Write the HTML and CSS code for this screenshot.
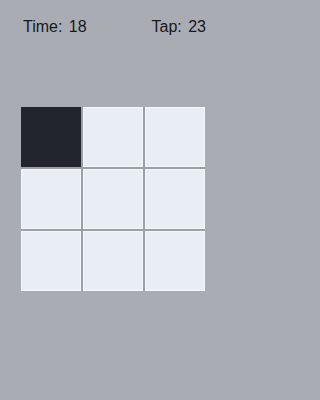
FILE: index.html
```html
<!DOCTYPE html>
<html>
<head>
<meta charset="utf-8">
<link rel="stylesheet" href="styles.css">
</head>
<body>
<div class="app">
  <div class="header">
    <span class="stat">Time: 18</span>
    <span class="stat">Tap: 23</span>
  </div>
  <div class="board">
    <div class="cell dark"></div>
    <div class="cell"></div>
    <div class="cell"></div>
    <div class="cell"></div>
    <div class="cell"></div>
    <div class="cell"></div>
    <div class="cell"></div>
    <div class="cell"></div>
    <div class="cell"></div>
  </div>
</div>
</body>
</html>
```
FILE: styles.css
```css
html, body {
  margin: 0;
  padding: 0;
  background: #a9adb3;
}
.app {
  width: 225px;
  height: 400px;
  display: flex;
  flex-direction: column;
  align-items: center;
  font-family: "Liberation Sans", Arial, sans-serif;
}
.header {
  width: 100%;
  box-sizing: border-box;
  display: flex;
  justify-content: space-between;
  padding: 17px 19px 0 23px;
  height: 107px;
}
.stat {
  font-size: 16px;
  color: #16181e;
  line-height: 20px;
  word-spacing: 2px;
}
.board {
  display: grid;
  grid-template-columns: repeat(3, 60px);
  grid-template-rows: repeat(3, 60px);
  gap: 2px;
  background: #9b9fa6;
}
.cell {
  background: #e9eef5;
  box-shadow: inset 0 0 0 1px #f4f7fb;
}
.cell.dark {
  background: #23252e;
  box-shadow: none;
}
```
